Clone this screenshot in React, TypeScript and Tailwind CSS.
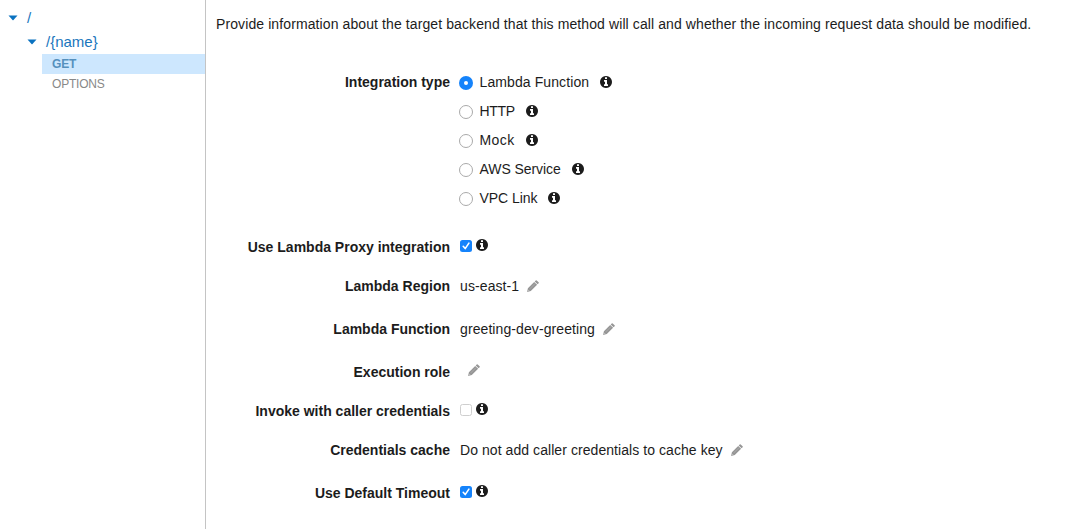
import type { ReactNode } from "react";

function InfoIcon({ className = "" }: { className?: string }) {
  return (
    <svg viewBox="0 128 1536 1536" className={`size-3 shrink-0 fill-[#1c1c1c] ${className}`}>
      <path d="M1024 1376v-160q0-14-9-23t-23-9h-96v-512q0-14-9-23t-23-9h-320q-14 0-23 9t-9 23v160q0 14 9 23t23 9h96v320h-96q-14 0-23 9t-9 23v160q0 14 9 23t23 9h448q14 0 23-9t9-23zm-128-896v-160q0-14-9-23t-23-9h-192q-14 0-23 9t-9 23v160q0 14 9 23t23 9h192q14 0 23-9t9-23zm640 416q0 209-103 385.5t-279.5 279.5-385.5 103-385.5-103-279.5-279.5-103-385.5 103-385.5 279.5-279.5 385.5-103 385.5 103 279.5 279.5 103 385.5z" />
    </svg>
  );
}

function PencilIcon({ className = "" }: { className?: string }) {
  return (
    <svg viewBox="0 0 12 12" className={`size-3 shrink-0 fill-[#969696] ${className}`}>
      <path d="M8.700.4Q9.200-.1 9.700.4l1.900 1.900q.5.500 0 1l-1 1L7.700 1.400zM7.200 1.900l2.900 2.900-6.300 6.300-3.700.8.800-3.700z" />
      <path d="M2.800 8.900l5.400-5.400" stroke="#bcbcbc" strokeWidth=".5" />
      <path d="M.9 9.700l1.400 1.400" stroke="#e0e0e0" strokeWidth=".6" />
    </svg>
  );
}

function Radio({ checked = false }: { checked?: boolean }) {
  return checked ? (
    <span className="flex size-[14px] shrink-0 items-center justify-center rounded-full bg-[#1583fb]">
      <span className="size-1 rounded-full bg-white" />
    </span>
  ) : (
    <span className="size-[14px] shrink-0 rounded-full border border-[#aaaaaa] bg-white" />
  );
}

function Checkbox({ checked = false }: { checked?: boolean }) {
  return checked ? (
    <span className="mb-0.5 flex size-3 shrink-0 items-center justify-center rounded-[2.5px] bg-[#1583fb]">
      <svg viewBox="0 0 12 12" className="size-3 fill-none stroke-white stroke-[1.6]">
        <path d="M3.200 6.300l2 2.300 3.700-5.500" strokeLinecap="round" strokeLinejoin="round" />
      </svg>
    </span>
  ) : (
    <span className="mb-0.5 size-3 shrink-0 rounded-[2.5px] border border-[#cfcfcf] bg-white" />
  );
}

function Row({ label, className, children }: { label: string; className: string; children?: ReactNode }) {
  return (
    <div className={`flex items-center ${className}`}>
      <div className="w-[244px] shrink-0 text-right font-bold">{label}</div>
      <div className="ml-2.5 flex items-center">{children}</div>
    </div>
  );
}

const types = [
  { name: "Lambda Function", className: "w-[120.5px] tracking-[0.1px]" },
  { name: "HTTP", className: "w-[46.5px] tracking-[-0.3px]" },
  { name: "Mock", className: "w-[46.5px] tracking-[0.4px]" },
  { name: "AWS Service", className: "w-[92.5px] tracking-[-0.07px]" },
  { name: "VPC Link", className: "w-[68.500px] tracking-[-0.05px]" },
];

function Caret({ className = "" }: { className?: string }) {
  return (
    <svg viewBox="0 0 10 6" className={`h-[6px] w-[10px] shrink-0 fill-[#0a72c0] ${className}`}>
      <path d="M.5.500h9L5.500 5q-.5.500-1 0z" />
    </svg>
  );
}

export default function App() {
  return (
    <div className="flex h-[529px] w-[1074px] overflow-hidden bg-white font-['Liberation_Sans',Arial,sans-serif] text-[14px] leading-5 whitespace-nowrap text-[#1c1c1c]">
      <nav className="w-[206px] shrink-0 border-r border-[#c4c4c4] pt-[6px] text-[#1a76bd]">
        <div className="flex h-6 items-center pl-2">
          <Caret />
          <span className="ml-[9px] text-[15px]">/</span>
        </div>
        <div className="flex h-6 items-center pl-[27px]">
          <Caret />
          <span className="ml-[9px] text-[15px]">/&#123;name&#125;</span>
        </div>
        <div className="ml-[42px] h-5 bg-[#cde7fe] pl-2.5 text-[12px] font-bold text-[#5590bd] tracking-[-0.2px]">GET</div>
        <div className="ml-[42px] h-5 pl-2.5 text-[12px] text-[#888888] tracking-[-0.2px]">OPTIONS</div>
      </nav>
      <main className="flex-1">
        <p className="mt-[14px] ml-2.5 tracking-[0.1px]">
          Provide information about the target backend that this method will call and whether the incoming request data should be modified.
        </p>
        <div className="mt-[34px] flex">
          <div className="w-[244px] shrink-0 pt-1 text-right font-bold">Integration type</div>
          <div className="ml-[9px]">
            {types.map((type, i) => (
              <div key={type.name} className="flex h-[29px] items-center">
                <Radio checked={i === 0} />
                <div className="mb-[2px] ml-[6.5px] flex items-center">
                  <span className={type.className}>{type.name}</span>
                  <InfoIcon />
                </div>
              </div>
            ))}
          </div>
        </div>
        <Row label="Use Lambda Proxy integration" className="mt-6 h-5">
          <Checkbox checked />
          <InfoIcon className="mb-1 ml-1" />
        </Row>
        <Row label="Lambda Region" className="mt-[19px] h-5">
          <span className="tracking-[0.1px]">us-east-1</span>
          <PencilIcon className="ml-2" />
        </Row>
        <Row label="Lambda Function" className="mt-[23px] h-5">
          <span className="tracking-[0.09px]">greeting-dev-greeting</span>
          <PencilIcon className="ml-2" />
        </Row>
        <Row label="Execution role" className="mt-[23px] h-5">
          <PencilIcon className="mb-1 ml-2" />
        </Row>
        <Row label="Invoke with caller credentials" className="mt-[19px] h-5">
          <Checkbox />
          <InfoIcon className="mb-1 ml-1" />
        </Row>
        <Row label="Credentials cache" className="mt-[19px] h-5">
          <span className="tracking-[0.065px]">Do not add caller credentials to cache key</span>
          <PencilIcon className="ml-2" />
        </Row>
        <Row label="Use Default Timeout" className="mt-[23px] h-5">
          <Checkbox checked />
          <InfoIcon className="mb-1 ml-1" />
        </Row>
      </main>
    </div>
  );
}
